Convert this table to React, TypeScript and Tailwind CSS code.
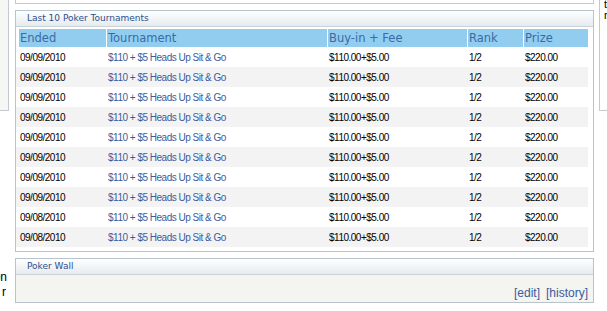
const rows = [
  "09/09/2010",
  "09/09/2010",
  "09/09/2010",
  "09/09/2010",
  "09/09/2010",
  "09/09/2010",
  "09/09/2010",
  "09/09/2010",
  "09/08/2010",
  "09/08/2010",
]

const rowFont = { fontFamily: '"Liberation Sans", Arial, sans-serif' }

function PanelHeader({ title }: { title: string }) {
  return (
    <div className="h-[16px] border-b border-[#c9d2d8] bg-gradient-to-b from-white to-[#e6ebee] pl-[11px] text-[9px] leading-[15px] text-[#2c4f8e] [font-family:'DejaVu_Sans',Verdana,sans-serif]">
      {title}
    </div>
  )
}

export default function App() {
  return (
    <div className="flex h-[311px] w-[607px] overflow-hidden bg-white">
      {/* left column, mostly off screen */}
      <div className="flex w-[9px] shrink-0 flex-col">
        <div className="h-[111px] border-r border-b border-[#c3c9ce] bg-[#f6f6f4]" />
        <div
          className="mt-[159px] flex flex-col text-[12px] leading-[15px] text-black"
          style={rowFont}
        >
          <div className="flex w-[7px] justify-end overflow-hidden whitespace-nowrap">information</div>
          <div className="ml-[2px] flex w-[4px] justify-end overflow-hidden whitespace-nowrap">member</div>
        </div>
      </div>

      {/* main column */}
      <div className="ml-[6px] flex w-[579px] shrink-0 flex-col">
        <div className="h-[4px] border-x border-b border-[#c3c9ce]" />

        <div className="mt-[6px] border border-[#b8c4cc] bg-white">
          <PanelHeader title="Last 10 Poker Tournaments" />
          <div className="pt-[2px] pb-[4px]">
            <div className="ml-[3px] grid w-[569px] grid-cols-[87px_220px_139px_55px_64px] gap-x-px bg-white text-[11.5px] leading-[18px] text-[#3a6aa6] [font-family:'DejaVu_Sans',Verdana,sans-serif]">
              <div className="bg-[#92cdf0] pl-[1px]">Ended</div>
              <div className="bg-[#92cdf0] pl-[1px]">Tournament</div>
              <div className="bg-[#92cdf0] pl-[1px]">Buy-in + Fee</div>
              <div className="bg-[#92cdf0] pl-[1px]">Rank</div>
              <div className="bg-[#92cdf0] pl-[1px]">Prize</div>
            </div>
            {rows.map((date, i) => (
              <div
                key={i}
                className={`grid h-[20px] w-[572px] grid-cols-[91px_221px_140px_56px_1fr] items-center text-[10px] tracking-[-0.5px] ${
                  i % 2 === 0 ? "bg-white" : "bg-[#f3f3f3]"
                }`}
                style={rowFont}
              >
                <div className="pl-[4px] text-black">{date}</div>
                <div className="pl-[1px] text-[#3b5c9c]">$110 + $5 Heads Up Sit &amp; Go</div>
                <div className="pl-[1px] text-black">$110.00+$5.00</div>
                <div className="pl-[1px] text-black">1/2</div>
                <div className="pl-[1px] text-black">$220.00</div>
              </div>
            ))}
          </div>
        </div>

        <div className="mt-[6px] border border-[#b8c4cc] bg-[#f4f4f1]">
          <PanelHeader title="Poker Wall" />
          <div
            className="flex h-[27px] items-end justify-end gap-[6px] pr-[5px] pb-[2px] text-[12px] leading-[14px] text-[#3b5c9c]"
            style={rowFont}
          >
            <span>[edit]</span>
            <span>[history]</span>
          </div>
        </div>
      </div>

      {/* right column, mostly off screen */}
      <div className="ml-[5px] flex w-[8px] shrink-0 flex-col">
        <div
          className="-mt-[1px] h-[112px] overflow-hidden whitespace-nowrap border-l border-b border-[#c3c9ce] pl-[4px] text-[11px] leading-[11px] text-black"
          style={rowFont}
        >
          <div>the</div>
          <div>registered</div>
        </div>
      </div>
    </div>
  )
}
